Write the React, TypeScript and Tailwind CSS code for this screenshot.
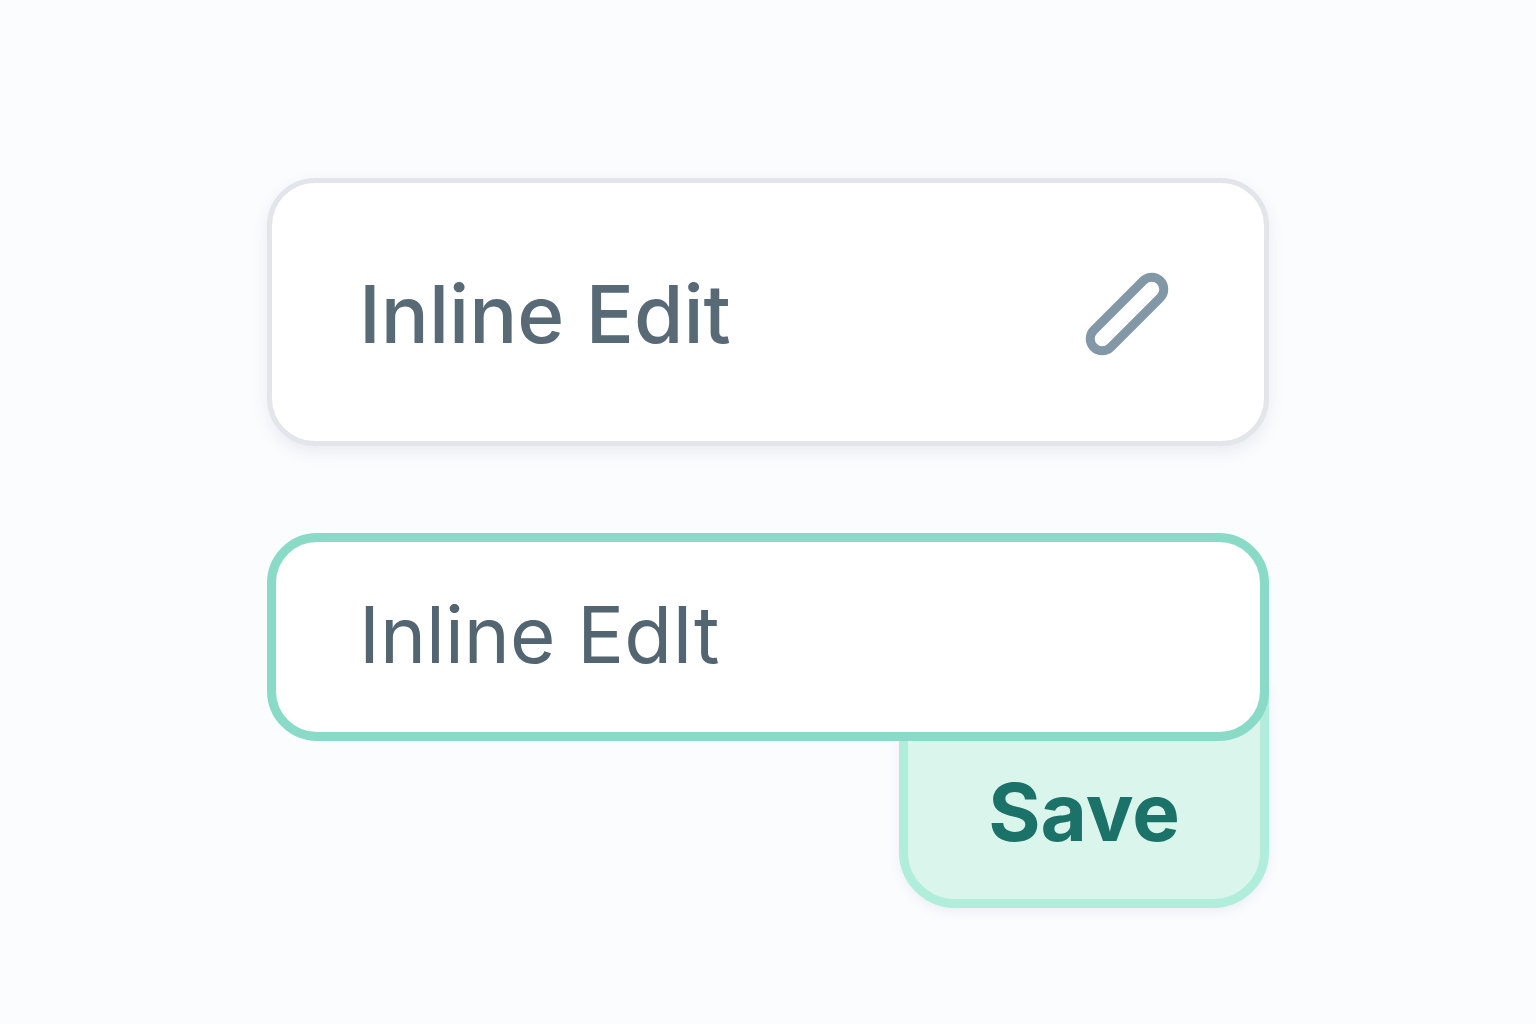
export default function App() {
  return (
    <main className="flex min-h-screen flex-col items-center bg-[#fbfcfe] px-6 pt-[178px] pb-24 font-['Inter',sans-serif]">
      <div className="w-full max-w-[1002px]">
        <section className="flex items-center justify-between rounded-[48px] border-[5px] border-[#e2e5e9] bg-white pt-[79px] pr-[95px] pb-[75px] pl-[87px] shadow-[0_6px_16px_rgba(70,90,110,0.1)]">
          <h1 className="text-[80px] leading-[104px] font-[550] text-[#586a76]">Inline Edit</h1>
          <button type="button" aria-label="Edit" className="shrink-0">
            <svg viewBox="0 0 84 84" className="size-[84px]" fill="none" stroke="#8398a6" strokeWidth="9">
              <rect x="-5" y="30" width="94" height="24" rx="12" transform="rotate(-45 42 42)" />
            </svg>
          </button>
        </section>
        <form className="mt-[87px] flex flex-col items-end" onSubmit={(e) => e.preventDefault()}>
          <input
            type="text"
            aria-label="Inline edit value"
            defaultValue="Inline EdIt"
            className="relative z-10 h-[208px] w-full rounded-[50px] border-[9px] border-[#8adac8] bg-white px-[83px] pb-[6px] text-[78px] font-normal text-[#526570] outline-none"
          />
          <button
            type="submit"
            className="-mt-[58px] w-[370px] rounded-b-[56px] border-[9px] border-[#b0eedb] bg-[#daf5ec] pt-[68px] pb-[35px] text-[80px] leading-[104px] font-bold text-[#1b7268] shadow-[0_4px_12px_rgba(70,90,110,0.08)]"
          >
            Save
          </button>
        </form>
      </div>
    </main>
  );
}
